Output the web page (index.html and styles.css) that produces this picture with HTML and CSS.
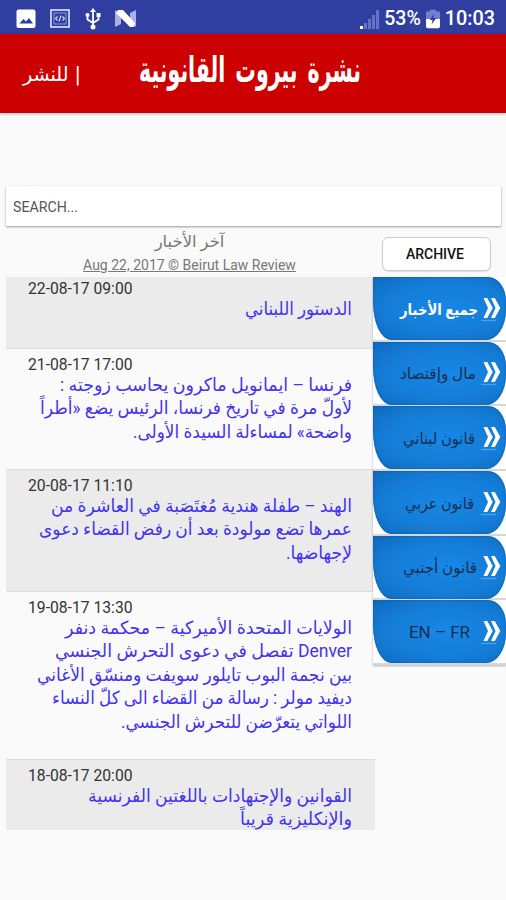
FILE: index.html
```html
<!DOCTYPE html>
<html lang="ar">
<head>
    <meta charset="UTF-8">
    <meta name="viewport" content="width=device-width, initial-scale=1.0">
    <title>Beirut Law Review</title>
    <link rel="stylesheet" href="styles.css">
</head>
<body>
    <!-- shared shapes for the menu buttons -->
    <svg class="defs" width="0" height="0">
        <symbol id="chevrons" viewBox="0 0 20 28">
            <path d="M0 25.5h15" stroke="#3fa3f5" stroke-width="1.4"/>
            <path d="M2.5 3h3.8l5.500 10-5.500 10H2.500l4.500-10zM10 3h3.800l5.500 10-5.500 10H10l4.500-10z" fill="#fff"/>
        </symbol>
    </svg>

    <div class="status-bar">
        <div class="status-left">
            <svg width="20" height="20" viewBox="0 0 20 20"><rect x=".5" y=".5" width="19" height="18.5" rx="2" fill="#fff"/><path d="M3.500 14.500l4-4.500 2.500 2.500 3-3.500 4 5.500z" fill="#303f9f"/></svg>
            <svg width="20" height="20" viewBox="0 0 20 20" fill="none" stroke="#cfd4f3"><rect x="1" y="1" width="18" height="17" stroke-width="1.8"/><rect x="4" y="4" width="12" height="11" stroke-width=".6"/><path d="M7.500 7.500l-2 2 2 2M12.500 7.500l2 2-2 2M11 6.500l-2 6" stroke-width="1.2"/></svg>
            <svg width="16" height="22" viewBox="0 0 16 22" fill="none" stroke="#fff" stroke-width="1.8"><path d="M8 3v16M2.500 7v4.500L8 15l5.500-3.500V7"/><path d="M8 0l3 4H5z" fill="#fff" stroke="none"/><circle cx="2.5" cy="7" r="2" fill="#fff" stroke="none"/><path d="M11.500 5h4v4h-4z" fill="#fff" stroke="none"/><circle cx="8" cy="19" r="2.5" fill="#fff" stroke="none"/></svg>
            <svg width="21" height="19" viewBox="0 0 21 19"><path d="M0 1l6 4v10l-6 3zM21 1l-6 3v10l6 4z" fill="#a9b2e6"/><path d="M3 1h5l12 13-1 4h-4L1 4z" fill="#fff"/></svg>
        </div>
        <div class="status-right">
            <svg width="19" height="20" viewBox="0 0 19 20" fill="#6673c4"><path d="M0 17h3v3H0z" fill="#fff"/><path d="M4 14h3v6H4zM8 10h3v10H8zM12 6h3v14h-3zM16 1h3v19h-3z"/></svg>
            <span class="percent">53%</span>
            <svg width="14" height="20" viewBox="0 0 15 20"><path d="M4 0h7v2h4v9H0V2h4z" fill="#7480c9"/><path d="M0 10h15v8.500l-1.500 1.500h-12L0 18.500z" fill="#fff"/><path d="M9 4l-5 7h3l-1 5 5-7H8z" fill="#303f9f"/></svg>
            <span class="clock">10:03</span>
        </div>
    </div>

    <div class="header">
        <svg width="506" height="78" viewBox="0 0 506 78">
            <text class="publish" x="81" y="47" textLength="58" lengthAdjust="spacingAndGlyphs">| للنشر</text>
            <text class="brand" x="361" y="48" textLength="222" lengthAdjust="spacingAndGlyphs">نشرة بيروت القانونية</text>
        </svg>
    </div>

    <div class="search-box"><input type="text" placeholder="SEARCH..."></div>

    <div class="title-row">
        <div class="titles">
            <h1>آخر الأخبار</h1>
            <a class="copyright">Aug 22, 2017 © Beirut Law Review</a>
        </div>
        <button class="archive-btn">ARCHIVE</button>
    </div>

    <div class="content">
        <div class="news-list" id="newsList"></div>
        <div class="menu" id="menu"></div>
    </div>

    <script>
        // height of each row, its date, and [text, width] for every line
        const news = [
            { height: 71, date: "22-08-17 09:00", lines: [["الدستور اللبناني", 107]] },
            { height: 121, date: "21-08-17 17:00", lines: [
                ["فرنسا – ايمانويل ماكرون يحاسب زوجته :", 292],
                ["لأولّ مرة في تاريخ فرنسا، الرئيس يضع «أطراً", 312],
                ["واضحة» لمساءلة السيدة الأولى.", 219]] },
            { height: 122, date: "20-08-17 11:10", lines: [
                ["الهند – طفلة هندية مُغتَصَبة في العاشرة من", 301],
                ["عمرها تضع مولودة بعد أن رفض القضاء دعوى", 313],
                ["لإجهاضها.", 66]] },
            { height: 168, date: "19-08-17 13:30", lines: [
                ["الولايات المتحدة الأميركية – محكمة دنفر", 287],
                ["Denver تفصل في دعوى التحرش الجنسي", 297],
                ["بين نجمة البوب تايلور سويفت ومنسّق الأغاني", 315],
                ["ديفيد مولر : رسالة من القضاء الى كلّ النساء", 300],
                ["اللواتي يتعرّضن للتحرش الجنسي.", 231]] },
            { height: 71, date: "18-08-17 20:00", lines: [
                ["القوانين والإجتهادات باللغتين الفرنسية", 264],
                ["والإنكليزية قريباً", 112]] }
        ];

        // label, its width, and the space between it and the arrow
        const menu = [
            ["جميع الأخبار", 78, 3],
            ["مال وإقتصاد", 76, 5],
            ["قانون لبناني", 72, 6],
            ["قانون عربي", 69, 7],
            ["قانون أجنبي", 74, 4],
            ["EN – FR", 61, 11]
        ];

        document.getElementById("newsList").innerHTML = news.map(item => `
            <div class="news-item" style="height: ${item.height}px">
                <div class="date">${item.date}</div>
                ${item.lines.map(([text, width]) => `
                <svg class="line" width="${width}" height="23.4"><text x="${width}" y="16" textLength="${width}" lengthAdjust="spacingAndGlyphs">${text}</text></svg>`).join("")}
            </div>`).join("");

        document.getElementById("menu").innerHTML = menu.map(([text, width, gap], i) => `
            <div class="menu-item ${i === 0 ? "active" : ""}">
                <div class="menu-btn" style="gap: ${gap}px">
                    <svg class="label" width="${width}" height="28"><text x="${i === 5 ? 0 : width}" y="20" direction="${i === 5 ? "ltr" : "rtl"}" textLength="${width}" lengthAdjust="spacingAndGlyphs">${text}</text></svg>
                    <svg class="arrow" width="20" height="28"><use href="#chevrons"/></svg>
                </div>
            </div>`).join("");
    </script>
</body>
</html>
```
FILE: styles.css
```css
* {
    margin: 0;
    padding: 0;
    box-sizing: border-box;
}

body {
    width: 506px;
    height: 900px;
    overflow: hidden;
    background-color: #fafafa;
    font-family: Roboto, "DejaVu Sans", sans-serif;
}

.defs {
    display: block;
}

.status-bar {
    display: flex;
    justify-content: space-between;
    align-items: center;
    height: 34px;
    padding: 3px 11px 0 16px;
    background-color: #303f9f;
    color: #fff;
}

.status-left {
    display: flex;
    align-items: center;
    gap: 14px;
}

.status-left svg:nth-child(3) {
    margin-left: 1px;
}

.status-right {
    display: flex;
    align-items: center;
    gap: 5px;
    font-size: 19.8px;
    font-weight: 500;
}

.percent {
    font-size: 19.5px;
}

.header {
    height: 79px;
    background-color: #cc0000;
    box-shadow: 0 1px 3px rgba(0, 0, 0, 0.25);
}

.header svg {
    display: block;
}

.header text {
    direction: rtl;
    fill: #fff;
    font-family: "DejaVu Sans", sans-serif;
}

.publish {
    font-size: 20px;
}

.brand {
    font-size: 36px;
    font-weight: bold;
    word-spacing: 5px;
}

.search-box {
    margin: 73px 5px 0 6px;
    height: 40px;
    background-color: #fff;
    box-shadow: 0 1px 2px rgba(0, 0, 0, 0.4);
}

.search-box input {
    width: 100%;
    height: 40px;
    padding: 1px 7px 0;
    border: none;
    background: none;
    font-family: Roboto, sans-serif;
    font-size: 14.2px;
}

.search-box input::placeholder {
    color: #555;
}

.title-row {
    display: flex;
    height: 51px;
    padding: 0 15px 0 6px;
}

.titles {
    width: 376px;
    padding-top: 6px;
    text-align: center;
    color: #777;
}

.titles h1 {
    height: 23px;
    margin-left: -9px;
    line-height: 20px;
    font-size: 16.4px;
    font-weight: normal;
}

.copyright {
    display: block;
    margin-left: -9px;
    line-height: 20px;
    font-size: 14px;
    text-decoration: underline;
}

.archive-btn {
    width: 109px;
    height: 34px;
    margin-top: 11px;
    padding-right: 3px;
    border: 1px solid #ccc;
    border-radius: 6px;
    background-color: #fff;
    box-shadow: 0 1px 1px rgba(0, 0, 0, 0.1);
    color: #111;
    font-family: Roboto, sans-serif;
    font-size: 14px;
    font-weight: 500;
}

.content {
    display: flex;
    align-items: flex-start;
    padding-left: 6px;
}

.news-list {
    width: 367px;
}

.news-item {
    display: flex;
    flex-direction: column;
    align-items: flex-end;
    padding: 6px 21px 0 22px;
    border-top: 1px solid #ddd;
}

.news-item:first-child {
    padding-top: 2px;
    border-top: none;
}

.news-item:nth-child(odd) {
    background-color: #ebebeb;
}

.news-item:last-child {
    width: 369px;
    padding-right: 23px;
}

.date {
    align-self: flex-start;
    height: 20px;
    line-height: 20px;
    font-size: 15.7px;
    color: #333;
}

.line {
    display: block;
    flex: none;
    overflow: visible;
}

.line text {
    direction: rtl;
    fill: #4433ee;
    font-size: 18px;
}

.menu {
    width: 133px;
    background-color: #fff;
    box-shadow: 0 1px 2px rgba(0, 0, 0, 0.3);
}

.menu-item {
    height: 64.7px;
    border-bottom: 2px solid #d4d8dc;
}

.menu-btn {
    display: flex;
    align-items: center;
    justify-content: flex-end;
    height: 63px;
    padding-right: 5px;
    border-radius: 0 18px 20px 18px / 0 24px 30px 38px;
    background: radial-gradient(ellipse at 55% 50%, #1787e6 0%, #147cd6 60%, #0f69bb 100%);
    box-shadow: inset 0 0 2px #0a5599;
}

.label {
    overflow: visible;
}

.label text {
    fill: #12304f;
    font-size: 16px;
}

.active .label text {
    fill: #fff;
    font-weight: bold;
}
```
